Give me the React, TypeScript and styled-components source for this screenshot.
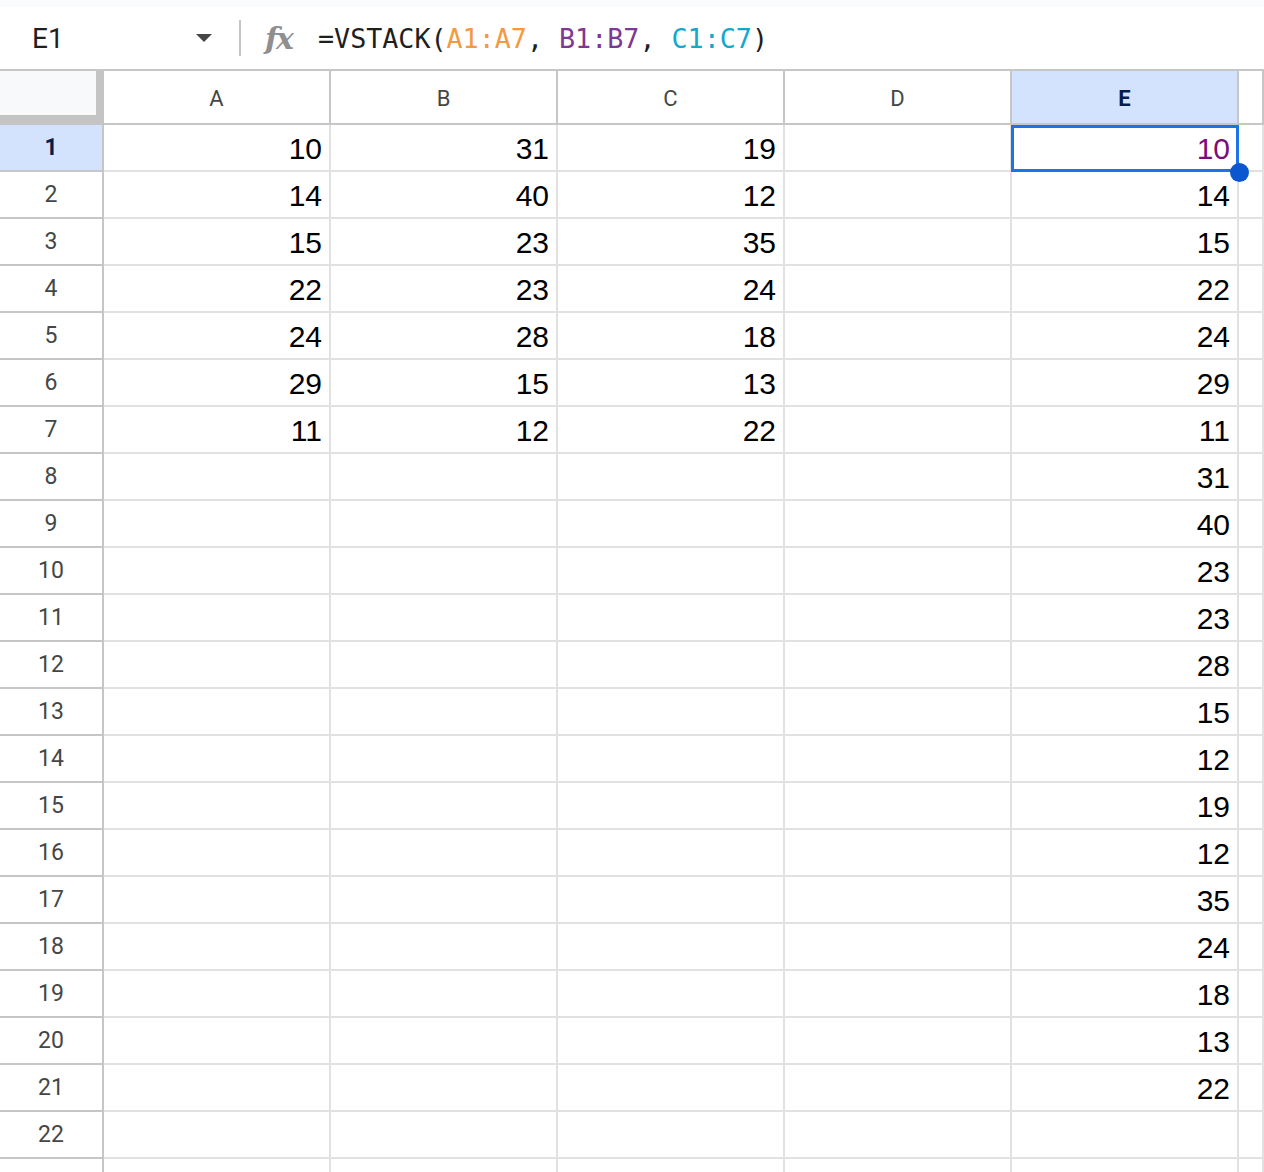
import React from "react";
import styled, { createGlobalStyle } from "styled-components";

const GlobalStyle = createGlobalStyle`
	html, body {
		margin: 0;
		padding: 0;
		background: #ffffff;
		overflow: hidden;
	}
	* {
		box-sizing: border-box;
	}
`;

const Page = styled("div")`
	width: 1264px;
	height: 1172px;
	overflow: hidden;
	background: #ffffff;
	font-family: Roboto, "Liberation Sans", sans-serif;
`;

const TopStrip = styled("div")`
	height: 7px;
	background: #f9fbfd;
`;

const FormulaBar = styled("div")`
	display: flex;
	align-items: center;
	height: 64px;
	border-bottom: 2px solid #c4c7c5;
	.name-box {
		display: flex;
		align-items: center;
		justify-content: space-between;
		width: 239px;
		padding: 0 27px 0 32px;
		font-size: 28px;
		color: #1f1f1f;
		.caret {
			width: 0;
			height: 0;
			border-left: 8px solid transparent;
			border-right: 8px solid transparent;
			border-top: 8px solid #444746;
		}
	}
	.divider {
		width: 2px;
		height: 36px;
		background: #c4c7c5;
	}
	.fx {
		width: 77px;
		padding-left: 24px;
		font-family: "DejaVu Serif", "Liberation Serif", serif;
		font-style: italic;
		font-weight: bold;
		font-size: 30px;
		color: #8f8f8f;
		letter-spacing: -2px;
	}
	.formula {
		font-family: "DejaVu Sans Mono", "Liberation Mono", monospace;
		font-size: 26.7px;
		color: #1f1f1f;
		white-space: pre;
	}
`;

const Ref = styled("span")<{ $color: string }>`
	color: ${(p) => p.$color};
`;

const Grid = styled("div")`
	display: grid;
	grid-template-columns: 104px repeat(5, 227px) 1fr;
	grid-template-rows: 54px repeat(22, 47px) 47px;
`;

const Corner = styled("div")`
	background: #f8f9fa;
	border-right: 8px solid #c4c4c4;
	border-bottom: 10px solid #c4c4c4;
`;

const ColHeader = styled("div")<{ $active?: boolean }>`
	display: flex;
	align-items: center;
	justify-content: center;
	border-right: 2px solid #c4c7c5;
	border-bottom: 2px solid #c4c7c5;
	background: ${(p) => (p.$active ? "#d3e3fd" : "#ffffff")};
	color: ${(p) => (p.$active ? "#041e49" : "#444746")};
	font-weight: ${(p) => (p.$active ? "bold" : "normal")};
	font-size: 22px;
	padding-top: 2px;
`;

const RowHeader = styled("div")<{ $active?: boolean }>`
	display: flex;
	align-items: center;
	justify-content: center;
	border-right: 2px solid #c4c7c5;
	border-bottom: 2px solid #c4c7c5;
	background: ${(p) => (p.$active ? "#d3e3fd" : "#ffffff")};
	color: ${(p) => (p.$active ? "#041e49" : "#444746")};
	font-weight: ${(p) => (p.$active ? "bold" : "normal")};
	font-size: 23px;
`;

const Cell = styled("div")<{ $selected?: boolean }>`
	position: relative;
	display: flex;
	align-items: center;
	justify-content: flex-end;
	padding: 3px 7px 0 0;
	border-right: 2px solid #e1e1e1;
	border-bottom: 2px solid #e1e1e1;
	font-family: "Liberation Sans", Arial, sans-serif;
	font-size: 30px;
	color: ${(p) => (p.$selected ? "#7b0d7b" : "#000000")};
	z-index: ${(p) => (p.$selected ? 2 : 0)};
`;

const Selection = styled("div")`
	position: absolute;
	top: 0;
	left: -1px;
	right: -2px;
	bottom: -2px;
	border: 3px solid #1a73e8;
	pointer-events: none;
`;

const FillHandle = styled("div")`
	position: absolute;
	right: -13px;
	bottom: -13px;
	width: 19px;
	height: 19px;
	border-radius: 50%;
	background: #0b57d0;
`;

const columns = ["A", "B", "C", "D", "E"];
const a = [10, 14, 15, 22, 24, 29, 11];
const b = [31, 40, 23, 23, 28, 15, 12];
const c = [19, 12, 35, 24, 18, 13, 22];
const e = [...a, ...b, ...c];

export default function App() {
	const rows = Array.from({ length: 23 }, (_, i) => i + 1);

	return (
		<Page>
			<GlobalStyle />
			<TopStrip />
			<FormulaBar>
				<div className="name-box">
					<span>E1</span>
					<span className="caret" />
				</div>
				<div className="divider" />
				<div className="fx">fx</div>
				<div className="formula">
					=VSTACK(<Ref $color="#f59a3c">A1:A7</Ref>,{" "}
					<Ref $color="#7e3794">B1:B7</Ref>,{" "}
					<Ref $color="#11a9cc">C1:C7</Ref>)
				</div>
			</FormulaBar>

			<Grid>
				<Corner />
				{columns.map((col) => (
					<ColHeader key={col} $active={col === "E"}>
						{col}
					</ColHeader>
				))}
				<ColHeader />

				{rows.map((r) => (
					<React.Fragment key={r}>
						<RowHeader $active={r === 1}>{r <= 22 ? r : ""}</RowHeader>
						<Cell>{a[r - 1]}</Cell>
						<Cell>{b[r - 1]}</Cell>
						<Cell>{c[r - 1]}</Cell>
						<Cell />
						<Cell $selected={r === 1}>
							{e[r - 1]}
							{r === 1 && (
								<Selection>
									<FillHandle />
								</Selection>
							)}
						</Cell>
						<Cell />
					</React.Fragment>
				))}
			</Grid>
		</Page>
	);
}
